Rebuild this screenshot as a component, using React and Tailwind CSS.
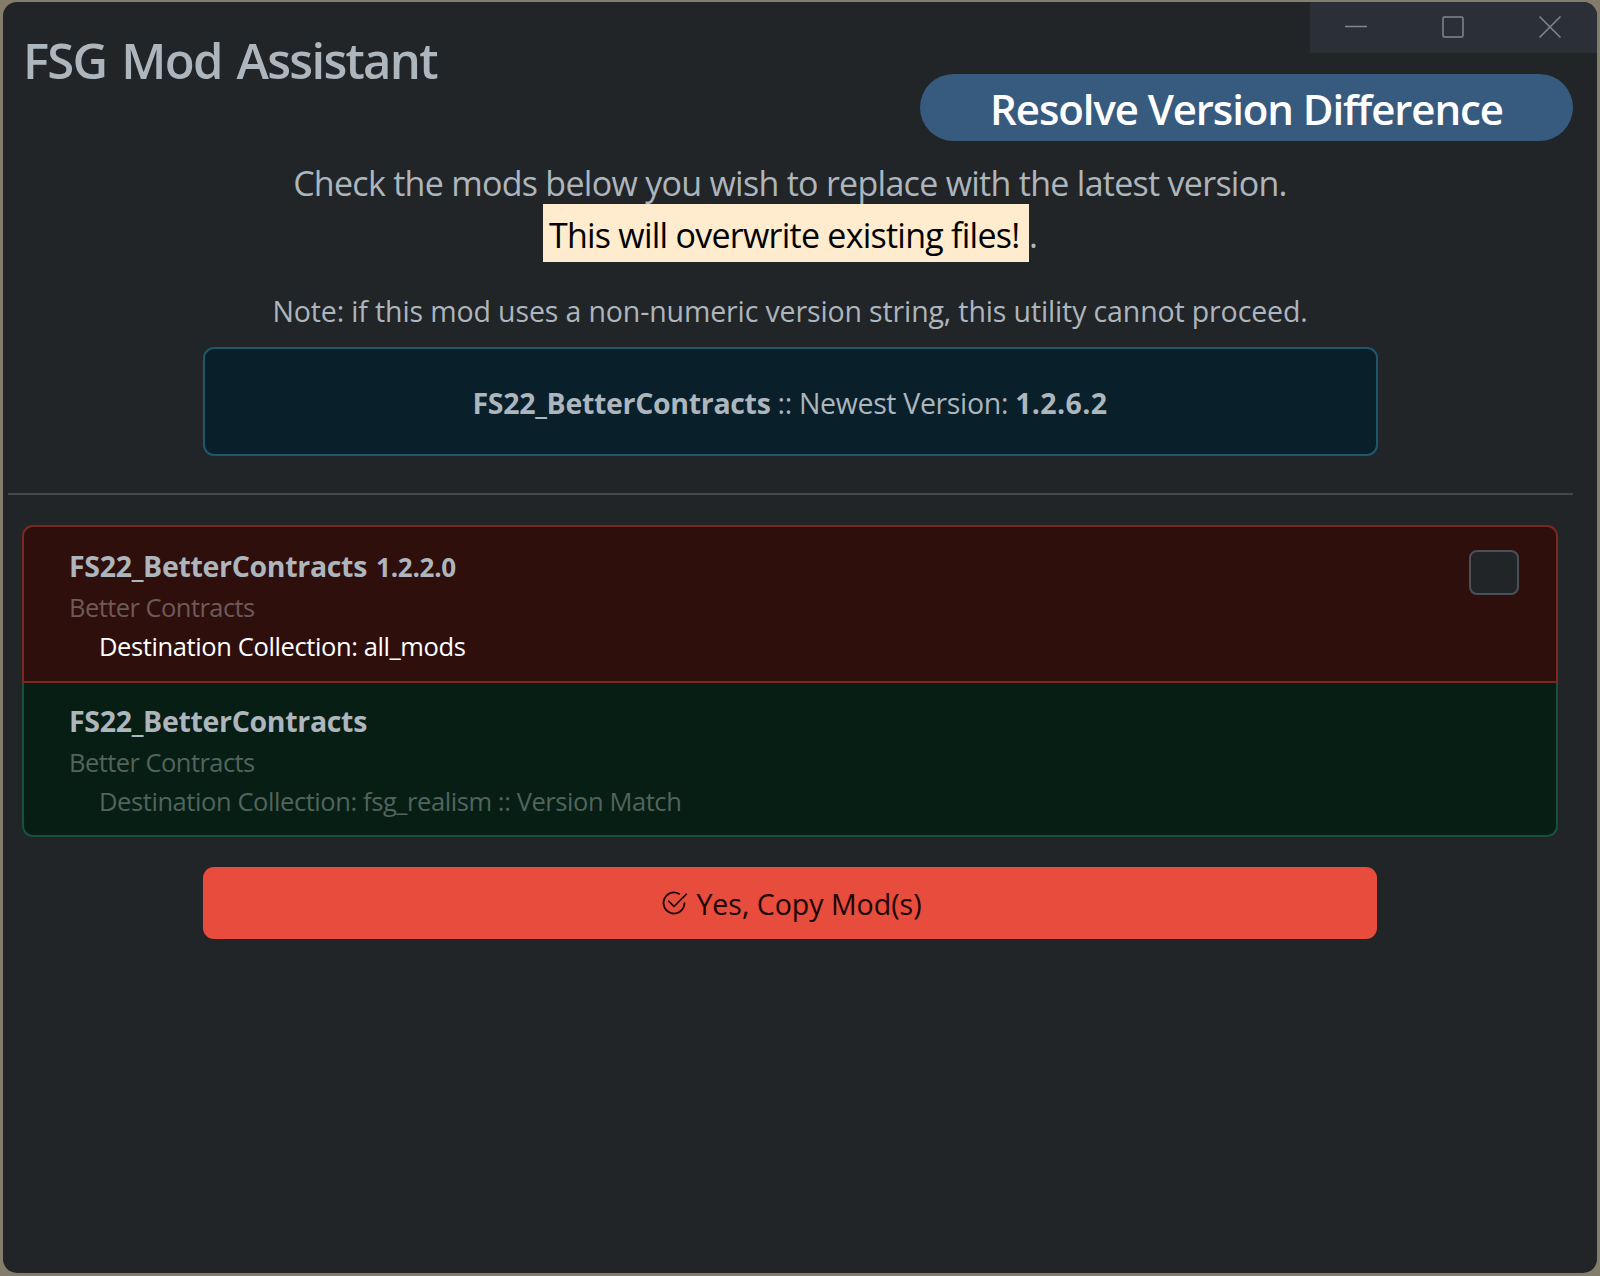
import { BsCheck2Circle } from "react-icons/bs";

function WindowControls() {
  return (
    <div className="flex h-[51px] w-[287px] shrink-0 bg-[#2b3036] pb-[1px] text-[#84878a]">
      <div className="flex w-[92px] items-center justify-center">
        <svg width="22" height="22" viewBox="0 0 22 22" fill="none" stroke="currentColor" strokeWidth="1.5">
          <path d="M0 10.5H22" />
        </svg>
      </div>
      <div className="flex flex-1 items-center justify-center">
        <svg width="22" height="22" viewBox="0 0 22 22" fill="none" stroke="currentColor" strokeWidth="1.5">
          <rect x="1" y="1" width="20" height="20" rx="1.5" />
        </svg>
      </div>
      <div className="flex w-[94px] items-center justify-center">
        <svg width="22" height="22" viewBox="0 0 22 22" fill="none" stroke="currentColor" strokeWidth="1.5">
          <path d="M0.5 0.5L21.5 21.5M21.5 0.5L0.5 21.5" />
        </svg>
      </div>
    </div>
  );
}

function ModName({ children }) {
  return <b className="text-[28.5px] tracking-[-0.32px]">{children}</b>;
}

export default function App() {
  return (
    <div className="h-[1276px] w-[1600px] bg-[#857d6c] px-[3px] pt-[2px] font-['Open_Sans',sans-serif]">
      <div className="flex h-[1271px] flex-col overflow-hidden rounded-[14px] bg-[#212528] text-[#adb5bd]">
        <header className="flex h-[140px] justify-between">
          <h1 className="pl-[20px] pt-[28px] text-[49px] font-semibold leading-[60px] tracking-[-1.75px] [word-spacing:4px]">
            FSG Mod Assistant
          </h1>
          <div className="flex flex-col items-end">
            <WindowControls />
            <div className="mr-[24px] mt-[21px] flex h-[67px] w-[653px] items-center justify-center rounded-full bg-[#375a7f] pt-[3px] text-[42px] font-semibold leading-[66px] tracking-[-1.1px] text-white">
              Resolve Version Difference
            </div>
          </div>
        </header>

        <main className="flex flex-col">
          <section className="flex flex-col items-center pr-[20px] text-center">
            <p className="mt-[15px] h-[44px] text-[34px] leading-[52px] tracking-[-0.72px]">
              Check the mods below you wish to replace with the latest version.
            </p>
            <p className="mt-[3px] flex text-[34px] leading-[60px] tracking-[-0.75px]">
              <span className="h-[58px] w-[486px] bg-[#ffebcd] pl-[6px] text-left leading-[62px] text-black">
                This will overwrite existing files!
              </span>
              <span className="leading-[62px]">.</span>
            </p>
            <p className="mt-[29px] h-[32px] text-[28.5px] leading-[32px] tracking-[-0.13px]">
              Note: if this mod uses a non-numeric version string, this utility cannot proceed.
            </p>
            <div className="mt-[20px] flex h-[109px] w-[1175px] items-center justify-center whitespace-pre rounded-[11px] border-2 border-[#20566c] bg-[#09202a] pt-[4px] text-[28.5px]">
              <ModName>FS22_BetterContracts</ModName>
              <span className="tracking-[-0.34px]"> :: Newest Version: </span>
              <b className="tracking-[0.4px]">1.2.6.2</b>
            </div>
          </section>

          <hr className="ml-[5px] mt-[37px] w-[1565px] border-t-2 border-[#43484c]" />

          <ul className="ml-[19px] mt-[30px] w-[1536px]">
            <li className="flex h-[158px] justify-between rounded-t-[11px] border-2 border-[#7a2820] bg-[#2e0f0c] pl-[45px] pr-[37px]">
              <div className="flex flex-col pt-[17px]">
                <div className="flex h-[44px] items-baseline gap-[9px] leading-[44px]">
                  <ModName>FS22_BetterContracts</ModName>
                  <b className="text-[26px] tracking-[-0.25px]">1.2.2.0</b>
                </div>
                <p className="h-[39px] text-[25.5px] leading-[39px] tracking-[-0.55px] text-[#6d5a5a]">Better Contracts</p>
                <p className="pl-[30px] text-[25.5px] leading-[39px] tracking-[-0.39px] text-white">
                  Destination Collection: all_mods
                </p>
              </div>
              <div className="mt-[23px] h-[45px] w-[50px] rounded-[8px] border-2 border-[#495057] bg-[#212528]" />
            </li>
            <li className="flex h-[154px] flex-col rounded-b-[11px] border-2 border-t-0 border-[#17503b] bg-[#061e14] pl-[45px] pt-[16px]">
              <div className="flex h-[44px] items-baseline leading-[44px]">
                <ModName>FS22_BetterContracts</ModName>
              </div>
              <p className="h-[39px] text-[25.5px] leading-[39px] tracking-[-0.55px] text-[#52645d]">Better Contracts</p>
              <p className="pl-[30px] text-[25.5px] leading-[39px] tracking-[-0.42px] text-[#52645d]">
                Destination Collection: fsg_realism :: Version Match
              </p>
            </li>
          </ul>

          <button className="ml-[200px] mt-[30px] flex h-[72px] w-[1174px] items-center justify-center gap-[8px] rounded-[11px] bg-[#e74c3c] pl-[2px] text-[28.5px] text-[#1a0303]">
            <BsCheck2Circle className="h-[28px] w-[28px]" />
            <span className="pt-[3px]">Yes, Copy Mod(s)</span>
          </button>
        </main>
      </div>
    </div>
  );
}
